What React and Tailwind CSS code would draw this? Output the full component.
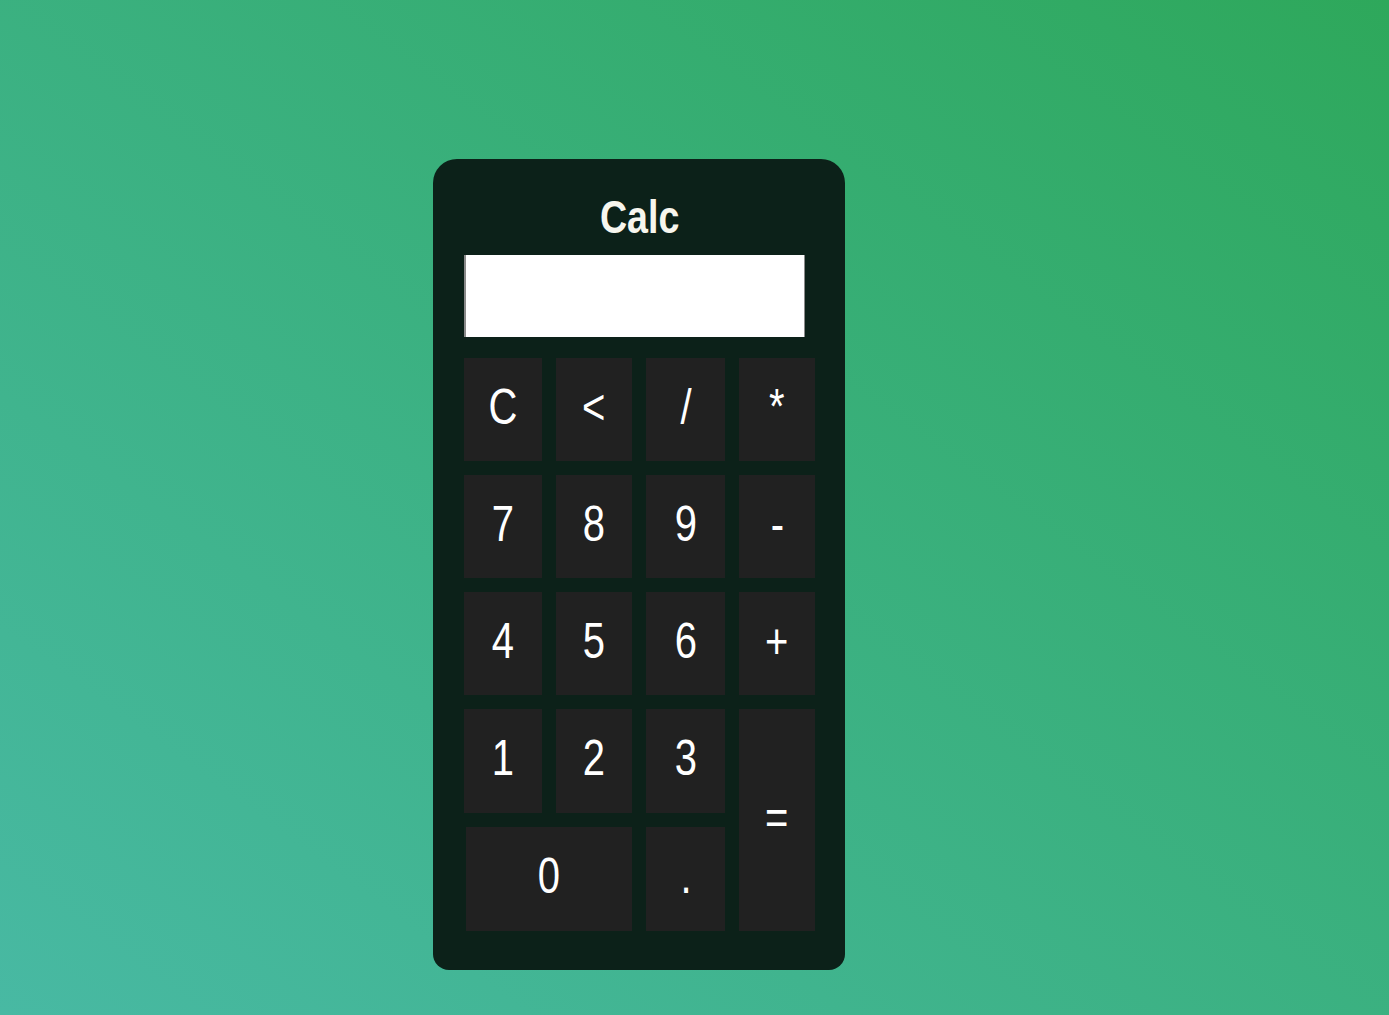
import React, { useState } from "react";

const keys = [
  { label: "C", cls: "" },
  { label: "<", cls: "" },
  { label: "/", cls: "" },
  { label: "*", cls: "" },
  { label: "7", cls: "" },
  { label: "8", cls: "" },
  { label: "9", cls: "" },
  { label: "-", cls: "" },
  { label: "4", cls: "" },
  { label: "5", cls: "" },
  { label: "6", cls: "" },
  { label: "+", cls: "" },
  { label: "1", cls: "" },
  { label: "2", cls: "" },
  { label: "3", cls: "" },
  { label: "=", cls: "row-span-2" },
  { label: "0", cls: "col-span-2 ml-[2px]" },
  { label: ".", cls: "" },
];

export default function App() {
  const [value, setValue] = useState("");

  const press = (k) => {
    if (k === "C") return setValue("");
    if (k === "<") return setValue((v) => v.slice(0, -1));
    if (k === "=") {
      try {
        // eslint-disable-next-line no-new-func
        setValue(String(Function(`return (${value})`)()));
      } catch {
        setValue("Error");
      }
      return;
    }
    setValue((v) => v + k);
  };

  return (
    <div
      className="min-h-[1015px] w-full bg-gradient-to-tr from-[#48b9a3] to-[#2ea85b] pt-[159px] pl-[433px]"
      style={{ fontFamily: '"Liberation Sans", Arial, sans-serif' }}
    >
      <div className="w-[412px] h-[811px] rounded-t-[24px] rounded-b-[16px] bg-[#0c2119] pl-[31px]">
        <div className="h-[96px] w-[351px] pt-[18px] flex items-center justify-center">
          <span className="inline-block scale-x-[0.8] text-[47px] leading-none font-bold text-[#f7f6ee]">
            Calc
          </span>
        </div>
        <input
          readOnly
          value={value}
          className="block w-[341px] h-[82px] bg-white border-l-2 border-r border-[#8a8a8a] outline-none px-3 text-right text-3xl text-black"
        />
        <div className="mt-[21px] grid grid-cols-[78px_76px_79px_76px] grid-rows-[103px_103px_103px_104px_104px] gap-x-[14px] gap-y-[14px]">
          {keys.map((k) => (
            <button
              key={k.label}
              onClick={() => press(k.label)}
              className={`${k.cls} bg-[#212121] text-white flex items-center justify-center pb-[6px]`}
            >
              <span className="inline-block scale-x-[0.8] text-[50px] leading-none">
                {k.label}
              </span>
            </button>
          ))}
        </div>
      </div>
    </div>
  );
}
